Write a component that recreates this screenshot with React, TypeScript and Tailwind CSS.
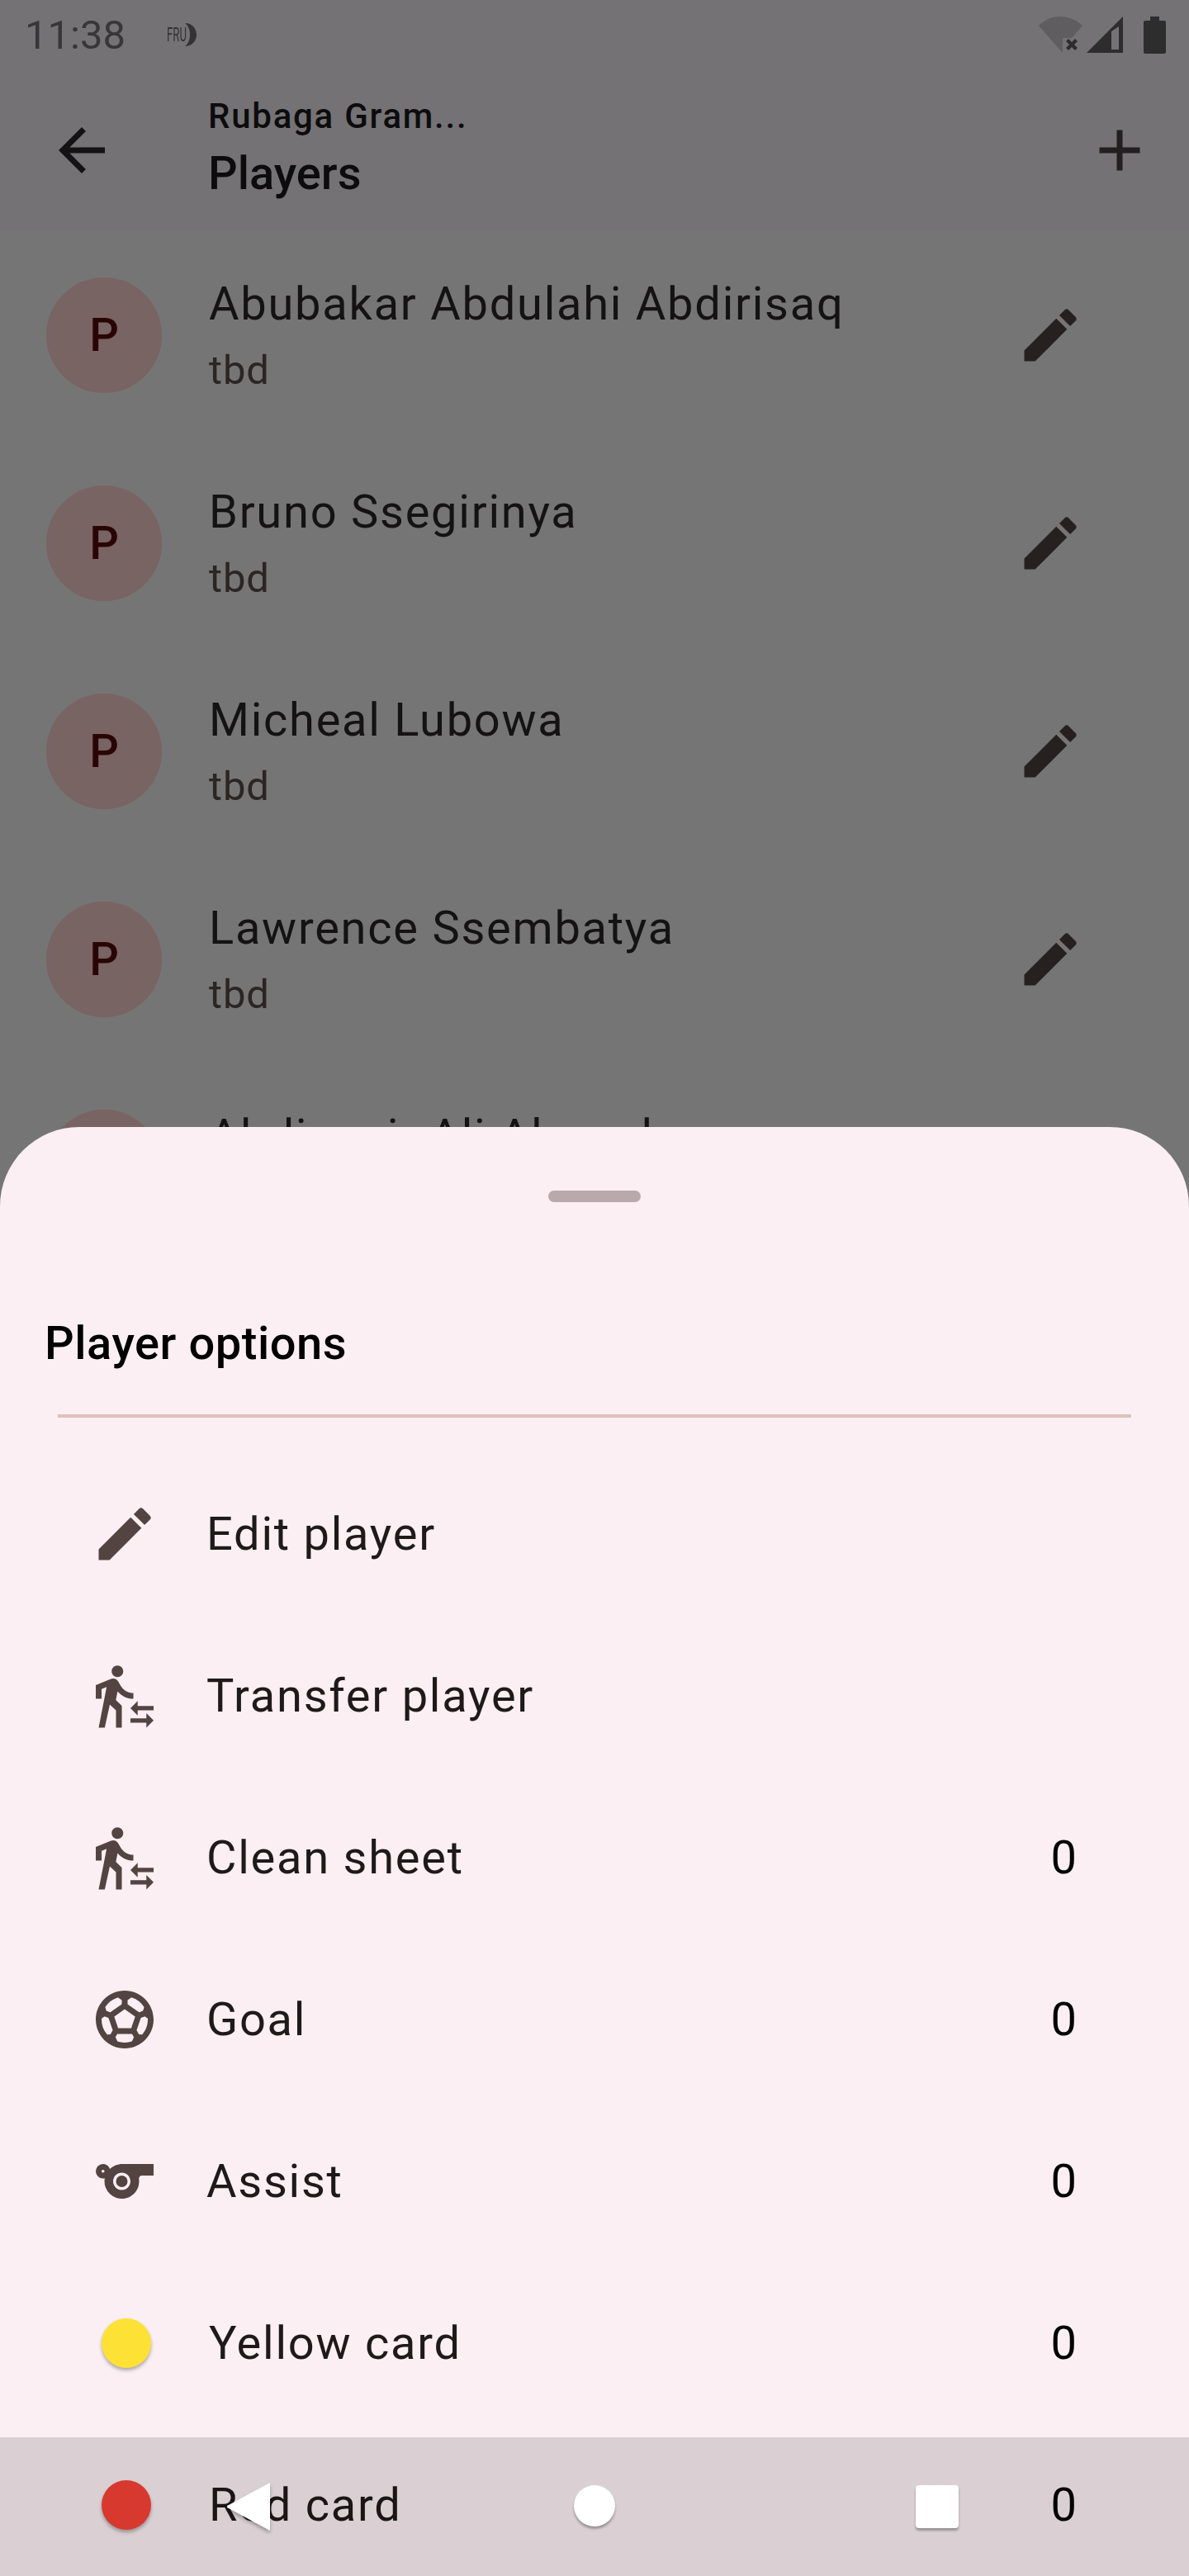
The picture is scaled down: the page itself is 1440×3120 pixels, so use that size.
import { ReactNode } from "react";
import { MdAdd, MdArrowBack, MdEdit, MdSports, MdSportsSoccer, MdTransferWithinAStation } from "react-icons/md";

const players = [
  "Abubakar Abdulahi Abdirisaq",
  "Bruno Ssegirinya",
  "Micheal Lubowa",
  "Lawrence Ssembatya",
  "Abdinasir Ali Ahmed",
];

function StatusBar() {
  return (
    <div className="flex h-[84px] items-center pl-[30px] pr-[28px]">
      <span className="text-[49px] leading-none text-[#383638]">11:38</span>
      <div className="ml-[50px] flex items-center">
        <span className="w-[21px] origin-left scale-x-[0.55] text-[24px] leading-none whitespace-nowrap text-[#333]">FRU</span>
        <svg viewBox="0 0 15 28" className="h-[28px] w-[15px]">
          <path d="M1 0c8 0 14 6 14 14s-6 14-14 14c4-3 6-8 6-14S5 3 1 0z" fill="#333" />
        </svg>
      </div>
      <div className="ml-auto flex items-start">
        <svg viewBox="0 0 53 44" className="h-[44px] w-[53px]">
          <path d="M0 11C7 4 16 0 26 0s19 4 27 11L40 26H29v18z" fill="#5f5d5f" />
          <path d="M33 30l3-3 4 4 4-4 3 3-4 4 4 4-3 3-4-4-4 4-3-3 4-4z" fill="#2d2d2d" />
        </svg>
        <svg viewBox="0 0 44 44" className="ml-[5px] h-[44px] w-[44px]">
          <path d="M0 44L44 0v44zM30 18v22h9V12z" fillRule="evenodd" fill="#2d2d2d" />
        </svg>
        <svg viewBox="0 0 27 45" className="ml-[25px] h-[45px] w-[27px]">
          <path d="M8 0h11v5h6a2 2 0 012 2v36a2 2 0 01-2 2H2a2 2 0 01-2-2V7a2 2 0 012-2h6z" fill="#2d2d2d" />
        </svg>
      </div>
    </div>
  );
}

function AppBar() {
  return (
    <div className="flex h-[196px] items-center pl-[57px] pr-[42px]">
      <MdArrowBack size={84} color="#141212" />
      <div className="mb-[7px] ml-[111px] flex flex-col text-[#0d0c0d]">
        <span className="text-[42px] leading-[56px] font-medium tracking-[1.75px]">Rubaga Gram...</span>
        <span className="mt-[6px] text-[56px] leading-[70px] font-medium">Players</span>
      </div>
      <MdAdd size={84} color="#231f1f" className="ml-auto" />
    </div>
  );
}

function PlayerRow({ name }: { name: string }) {
  return (
    <div className="flex h-[252px] items-center pl-[56px] pr-[126px]">
      <div className="flex h-[140px] w-[140px] items-center justify-center rounded-full bg-[#786462] text-[56px] font-medium text-[#2a0505]">
        P
      </div>
      <div className="ml-[57px] flex flex-col">
        <span className="text-[56px] leading-[80px] tracking-[1.75px] text-[#141212]">{name}</span>
        <span className="mt-[6px] text-[49px] leading-[70px] tracking-[0.875px] text-[#2b2523]">tbd</span>
      </div>
      <MdEdit size={84} color="#262120" className="ml-auto" />
    </div>
  );
}

function CardDot({ className }: { className: string }) {
  return (
    <div className="flex w-[87px] justify-center pl-[1px]">
      <div className={`h-[60px] w-[60px] rounded-full shadow-[0_3px_4px_rgba(0,0,0,0.3)] ${className}`} />
    </div>
  );
}

function OptionRow({ icon, label, value }: { icon: ReactNode; label: string; value?: number }) {
  return (
    <div className="flex h-[196px] items-center pl-[109px] pr-[136px]">
      <div className="flex min-w-[84px] justify-center">{icon}</div>
      <span className="ml-[57px] text-[56px] leading-none tracking-[1.75px] text-[#1f1a1a]">{label}</span>
      {value !== undefined && <span className="ml-auto text-[56px] leading-none text-black">{value}</span>}
    </div>
  );
}

function PlayerOptionsSheet() {
  const iconColor = "#534341";
  return (
    <div className="absolute inset-x-0 bottom-0 h-[1755px] rounded-t-[96px] bg-[#fbeff3]">
      <div className="flex justify-center pt-[77px]">
        <div className="h-[14px] w-[112px] rounded-full bg-[#b9a9ad]" />
      </div>
      <div className="mt-[138px] pl-[54px] text-[56px] leading-[66px] font-medium tracking-[0.55px] text-black">Player options</div>
      <div className="mx-[70px] mt-[53px] h-[4px] bg-[#dcc1bc]" />
      <div className="mt-[43px]">
        <OptionRow icon={<MdEdit size={84} color={iconColor} />} label="Edit player" />
        <OptionRow icon={<MdTransferWithinAStation size={84} color={iconColor} />} label="Transfer player" />
        <OptionRow icon={<MdTransferWithinAStation size={84} color={iconColor} />} label="Clean sheet" value={0} />
        <OptionRow icon={<MdSportsSoccer size={84} color={iconColor} />} label="Goal" value={0} />
        <OptionRow icon={<MdSports size={84} color={iconColor} />} label="Assist" value={0} />
        <OptionRow icon={<CardDot className="bg-[#fde135]" />} label="Yellow card" value={0} />
        <OptionRow icon={<CardDot className="bg-[#f74235]" />} label="Red card" value={0} />
      </div>
    </div>
  );
}

function NavBar() {
  return (
    <div className="absolute inset-x-0 bottom-0 h-[168px] bg-black/[0.13]">
      <svg viewBox="0 0 52 58" className="absolute left-[275px] top-[55px] h-[58px] w-[52px] drop-shadow-[0_3px_2px_rgba(0,0,0,0.3)]">
        <path d="M50 1a1 1 0 012 1v54a1 1 0 01-2 1L2 31a2 2 0 010-4z" fill="#fff" />
      </svg>
      <div className="absolute left-[695px] top-[58px] h-[50px] w-[50px] rounded-full bg-white shadow-[0_3px_3px_rgba(0,0,0,0.3)]" />
      <div className="absolute left-[1109px] top-[58px] h-[52px] w-[52px] rounded-[4px] bg-white shadow-[0_3px_3px_rgba(0,0,0,0.3)]" />
    </div>
  );
}

export default function App() {
  return (
    <div className="relative h-[3120px] w-[1440px] overflow-hidden bg-[#757575] font-['Roboto',sans-serif]">
      <div className="bg-[#747275]">
        <StatusBar />
        <AppBar />
      </div>
      <div>
        {players.map((name) => (
          <PlayerRow key={name} name={name} />
        ))}
      </div>
      <PlayerOptionsSheet />
      <NavBar />
    </div>
  );
}
